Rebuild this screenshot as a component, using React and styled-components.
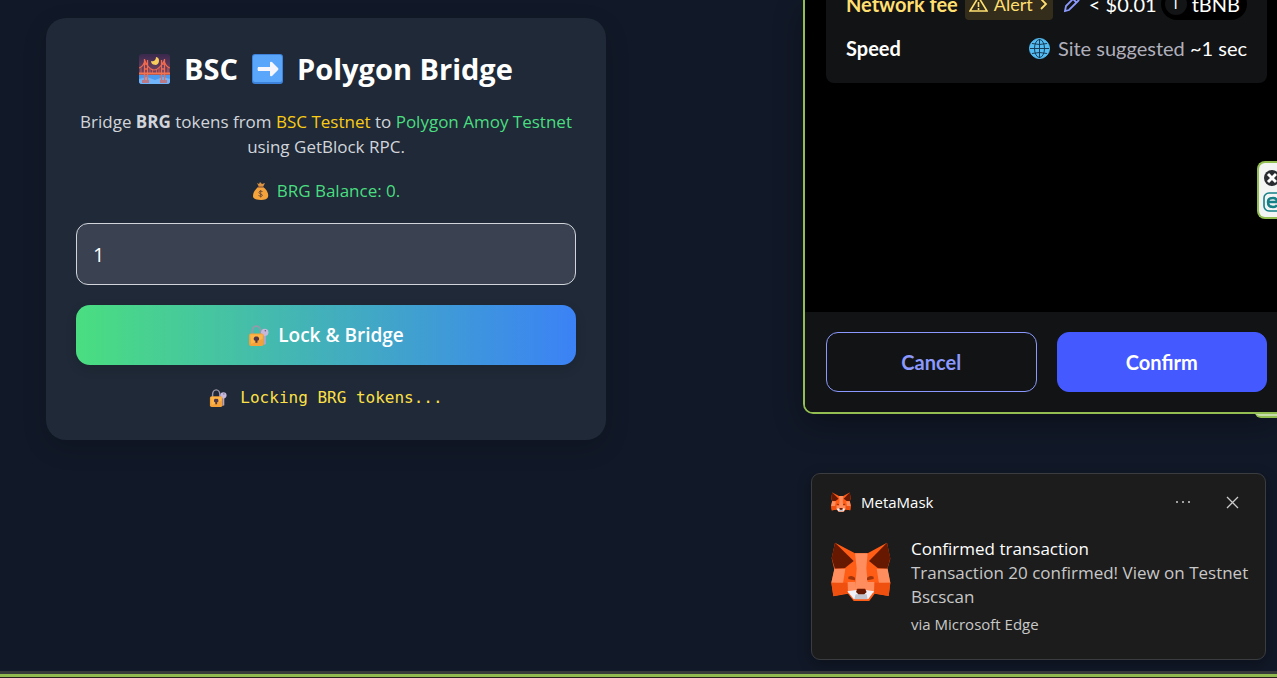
import React, { useState } from 'react'
import styled, { createGlobalStyle } from 'styled-components'

const GlobalStyle = createGlobalStyle`
  * {
    box-sizing: border-box;
  }

  body {
    margin: 0;
    background: #111827;
    color: #fff;
    font-family: "Open Sans", sans-serif;
    overflow: hidden;
  }

  h1, h2, p {
    margin: 0;
  }

  button {
    padding: 0;
    border: 0;
    background: none;
    color: inherit;
    font: inherit;
    cursor: pointer;
  }

  svg {
    display: block;
    flex-shrink: 0;
  }
`

const Desktop = styled.div`
  display: flex;
  flex-direction: column;
  height: 100vh;
`

const Workspace = styled.main`
  flex: 1;
  min-height: 0;
  display: grid;
  grid-template-columns: 1fr 474px;
`

const Frame = styled.footer`
  flex-shrink: 0;
  height: 7px;
  border-top: 3px solid #363939;
  border-bottom: 1px solid #2a2022;
  background: #90b94f;
`

const BridgeCard = styled.section`
  align-self: start;
  width: calc(100% - 92px);
  max-width: 560px;
  margin: 18px 46px;
  padding: 30px;
  border-radius: 20px;
  background: #1f2937;
  box-shadow: 0 8px 24px rgba(0, 0, 0, .15);
  text-align: center;

  h1 {
    display: flex;
    align-items: center;
    justify-content: center;
    gap: 14px;
    margin-bottom: 20px;
    font-size: 29px;
    font-weight: 700;
    line-height: 41px;
  }
`

const Intro = styled.p`
  color: #d1d5db;
  font-size: 17px;
  line-height: 25px;
`

const Chain = styled.span`
  color: ${({ $color }) => $color};
`

const IconLine = styled.p`
  display: flex;
  align-items: center;
  justify-content: center;
  gap: ${({ $gap }) => $gap};
  line-height: 24px;
`

const Balance = styled(IconLine)`
  margin-top: 20px;
  color: #4ade80;
  font-size: 17px;
`

const Status = styled(IconLine)`
  color: #fde047;
  font-family: "DejaVu Sans Mono", monospace;
  font-size: 16px;
  line-height: 25px;
`

const AmountInput = styled.input`
  display: block;
  width: 100%;
  height: 62px;
  margin: 20px 0;
  padding: 0 16px;
  border: 1px solid #d1d5db;
  border-radius: 12px;
  background: #3a4151;
  color: #fff;
  font: 20px "Open Sans", sans-serif;
  outline: 0;
`

const BridgeButton = styled.button`
  display: flex;
  align-items: center;
  justify-content: center;
  gap: 9px;
  width: 100%;
  height: 60px;
  margin-bottom: 20px;
  border-radius: 14px;
  background: linear-gradient(90deg, #4ade80, #3b82f6);
  box-shadow: 0 4px 12px rgba(0, 0, 0, .1);
  font-size: 19px;
  font-weight: 600;
`

const SideColumn = styled.div`
  display: flex;
  flex-direction: column;
`

const Wallet = styled.section`
  position: relative;
  display: flex;
  flex-direction: column;
  height: 414px;
  border: solid #93be52;
  border-width: 0 0 2px 2px;
  border-bottom-left-radius: 10px;
  background: #000;
  box-shadow: 0 10px 30px rgba(0, 0, 0, .3);
  font-family: Lato, sans-serif;
  font-size: 20px;
`

const FeePanel = styled.div`
  display: flex;
  flex-direction: column;
  justify-content: flex-end;
  gap: 12px;
  height: 83px;
  margin: 0 10px 0 21px;
  padding: 0 20px 19px;
  border-radius: 0 0 8px 8px;
  background: #121314;
  overflow: hidden;
`

const FeeRow = styled.div`
  display: flex;
  flex-shrink: 0;
  align-items: center;
  height: 32px;
  white-space: nowrap;
`

const Label = styled.span`
  color: ${({ $color }) => $color || '#fff'};
  font-weight: 700;
`

const Values = styled.div`
  display: flex;
  align-items: center;
  gap: 8px;
  margin-left: auto;
`

const AlertChip = styled.button`
  display: flex;
  align-items: center;
  gap: 6px;
  height: 32px;
  margin-left: 7px;
  padding: 0 4px;
  border-radius: 4px;
  background: #342d1b;
  color: #ffdf70;
  font-size: 18px;
`

const EditButton = styled.button`
  color: #8b99ff;
`

const Token = styled.span`
  display: flex;
  align-items: center;
  gap: 5px;
  height: 32px;
  margin-left: -4px;
  padding: 0 7px 0 4px;
  border-radius: 16px;
  background: #000;
`

const TokenMark = styled.span`
  width: 22px;
  height: 22px;
  border-radius: 50%;
  background: #131416;
  font-size: 14px;
  line-height: 22px;
  text-align: center;
`

const Muted = styled.span`
  color: #b0b0bd;
`

const WalletActions = styled.div`
  display: flex;
  gap: 20px;
  margin-top: auto;
  padding: 20px 10px 20px 21px;
  border-bottom-left-radius: 8px;
  background: #121314;
`

const WalletButton = styled.button`
  flex: 1;
  height: 60px;
  border: 1px solid ${({ $primary }) => ($primary ? '#4459ff' : '#8b99ff')};
  border-radius: 12px;
  background: ${({ $primary }) => ($primary ? '#4459ff' : 'transparent')};
  color: ${({ $primary }) => ($primary ? '#fff' : '#8b99ff')};
  font-weight: 700;
`

const DockTab = styled.div`
  position: absolute;
  top: 161px;
  right: 0;
  display: flex;
  flex-direction: column;
  gap: 5px;
  width: 20px;
  height: 58px;
  padding: 6px 0 0 4px;
  border: 2px solid #93be52;
  border-right: 0;
  border-radius: 8px 0 0 8px;
  background: #f3f5f5;
  overflow: hidden;
`

const DockEdge = styled.div`
  position: absolute;
  top: 412px;
  right: 0;
  width: 22px;
  height: 6px;
  border: solid #93be52;
  border-width: 2px 0;
  border-bottom-left-radius: 6px;
  background: #c6dcab;
`

const Toast = styled.aside`
  margin: 59px 11px 0 8px;
  padding: 15px 12px 23px 19px;
  border: 1px solid #3a3c40;
  border-radius: 9px;
  background: #1c1c1c;
  box-shadow: 0 4px 14px rgba(0, 0, 0, .3);
  color: #c8c8c8;
`

const ToastHeader = styled.header`
  display: flex;
  align-items: center;
  height: 25px;
  margin-bottom: 23px;
  padding-right: 7px;
  color: #fff;
  font-size: 15px;

  span {
    flex: 1;
    margin-left: 10px;
  }

  button {
    margin-left: 27px;
    color: #ccc;
  }
`

const ToastBody = styled.div`
  display: flex;
  gap: 20px;

  svg {
    margin-top: 4px;
  }

  h2, p {
    font-size: 17px;
    font-weight: 400;
    line-height: 24px;
  }

  h2 {
    color: #fff;
  }

  small {
    display: block;
    margin-top: 3px;
    font-size: 15px;
    line-height: 24px;
  }
`

const BridgeIcon = () => (
  <svg width="31" height="30" viewBox="0 0 31 30">
    <defs>
      <linearGradient id="dusk" x2="0" y2="1">
        <stop stopColor="#39284d" />
        <stop offset=".7" stopColor="#784865" />
      </linearGradient>
      <clipPath id="scene"><rect width="31" height="30" rx="3" /></clipPath>
    </defs>
    <g clipPath="url(#scene)">
      <rect width="31" height="30" fill="url(#dusk)" />
      <path d="M0 21h31v9H0z" fill="#4b98ef" />
      <path d="M0 25l8-2 8 3 8-3 7 2v5H0z" fill="#71b4fa" />
      <path d="M17 3a4 4 0 1 1-5 4c3 1 5-1 5-4z" fill="#f8cd5c" />
      <path d="M0 14q4-1 6-7 4 9 9 9t10-9q2 6 6 7" fill="none" stroke="#f2694f" strokeWidth="1.2" />
      <path d="M2 14v6M11 14v6M13.500 16v4M17.500 16v4M20 14v6M29 14v6" stroke="#d35a53" />
      <path d="M5.500 5v23M8.500 6v22M22.500 6v22M25.500 5v23M5 10h3M23 10h3M5 15h3M23 15h3" stroke="#f16a50" strokeWidth="1.300" />
      <path d="M0 19.500h31" stroke="#f3734e" strokeWidth="2" />
      <path d="M3 26h7v3H3zM21 26h7v3h-7z" fill="#bb7885" />
    </g>
  </svg>
)

const ArrowIcon = () => (
  <svg width="31" height="30" viewBox="0 0 31 30">
    <rect width="31" height="30" rx="3" fill="#3d83dc" />
    <rect x="1" y="1" width="29" height="27" rx="2" fill="#59a6fa" />
    <path d="M6 13h12V9q0-2 2-1l6 6q1 1 0 2l-6 6q-2 1-2-1v-4H6q-1-2 0-4z" fill="#f7f6fd" />
  </svg>
)

const MoneyBag = () => (
  <svg width="17" height="18" viewBox="0 0 17 18">
    <path d="M5 1l2 1 1-2 2 2 3-1-2 4H7z" fill="#d99343" />
    <path d="M6 5h5c3 2 6 6 5 10q-1 3-7 3-8 0-8-4c0-4 3-7 5-9z" fill="#f5a43b" />
    <path d="M6 5h5" stroke="#9b5938" strokeWidth="1.3" />
    <path d="M10.500 9.500Q7 8 7 10.500q0 1 1.500 1.500 2 .5 2 1.500-1 2-4 0M8.700 8v7.500" fill="none" stroke="#73503a" />
  </svg>
)

const LockIcon = ({ size }) => (
  <svg width={size} height={size} viewBox="0 0 20 20">
    <path d="M4 9V6a4 5 0 0 1 8 0v3" fill="none" stroke="#9b97a9" strokeWidth="1.600" />
    <path d="M15 8h2v10l-2 1z" fill="#b6a5ca" />
    <circle cx="16" cy="7" r="3.500" fill="#c6b8db" />
    <circle cx="16.500" cy="5.500" r=".7" fill="#665d79" />
    <rect x="1" y="8" width="14" height="12" rx="2" fill="#f4a13a" />
    <path d="M2 9h12v4L3 18z" fill="#ffbd4c" opacity=".7" />
    <path d="M8 11a2 2 0 0 1 1 4v2H7v-2a2 2 0 0 1 1-4z" fill="#503748" />
  </svg>
)

const GlobeIcon = () => (
  <svg width="21" height="21" viewBox="0 0 21 21" fill="none" stroke="#183d58">
    <circle cx="10.500" cy="10.500" r="10" fill="#54bdf4" stroke="#54bdf4" />
    <ellipse cx="10.500" cy="10.500" rx="5" ry="9" />
    <path d="M10.500 1v19M1 10.500h19M3 5.500q7.500 2 15 0M3 15.500q7.500-2 15 0" />
  </svg>
)

const FoxIcon = ({ size }) => (
  <svg width={size} height={size} viewBox="0 0 180 174">
    <path d="M12 2l60 32h38l58-32 10 48-9 32 9 40-5 40-42-7-17 23H69l-18-23-44 8-6-41 9-39-8-34z" fill="#ff5c16" />
    <path d="M12 2L2 48l10 32 29-1 27-22z" fill="#661800" />
    <path d="M168 2l10 47-9 31-28-1-27-22z" fill="#661800" />
    <path d="M72 34h38l-4 45 6 63H72l5-63z" fill="#ff8d5d" />
    <path d="M10 80h33l-7 44-35-2zM170 80h-33l7 44 34-2z" fill="#ff8d5d" />
    <path d="M1 122h49l1 32-44 8zM178 122h-48l-1 32 44 8z" fill="#f0500f" />
    <path d="M50 120h23l3 30-25 4zM130 120h-22l-4 30 25 4z" fill="#ff8d5d" />
    <path d="M52 104q11-5 20 3v8q-8-2-20-4zM128 104q-11-5-20 3v8q8-2 20-4z" fill="#a0350b" />
    <path d="M49 148l28-4 5 13h17l5-13 25 4-17 23H68z" fill="#f0f2f8" />
    <path d="M74 157h33l3 15H70z" fill="#c0c4cd" />
    <path d="M79 140h23l5 10-7 7H82l-7-7z" fill="#661800" />
  </svg>
)

const WarningIcon = () => (
  <svg width="19" height="18" viewBox="0 0 19 18" fill="none" stroke="currentColor" strokeWidth="1.6">
    <path d="M9.500 2L18 16H1zM9.500 7v5M9.500 13v2" />
  </svg>
)

const ChevronIcon = () => (
  <svg width="10" height="14" viewBox="0 0 10 14" fill="none" stroke="currentColor" strokeWidth="1.800">
    <path d="M2 2l5 5-5 5" />
  </svg>
)

const PencilIcon = () => (
  <svg width="18" height="18" viewBox="0 0 18 18" fill="none" stroke="currentColor" strokeWidth="1.800">
    <path d="M2 16l1-5L12 2q2-1 3 1 2 1 0 3L6 15zM10 4l4 4" />
  </svg>
)

const DockIcons = () => (
  <>
    <svg width="18" height="18" viewBox="0 0 18 18">
      <circle cx="9" cy="9" r="8" fill="#292c30" />
      <path d="M5 5l8 8M13 5l-8 8" stroke="#fff" strokeWidth="3" />
    </svg>
    <svg width="20" height="20" viewBox="0 0 20 20" fill="none" stroke="#168086">
      <rect x="1" y="1" width="18" height="18" rx="5" strokeWidth="1.600" />
      <path d="M6 10h8q0-4-4-4-5 0-5 4 0 5 5 5 3 0 4-2" strokeWidth="2.500" />
    </svg>
  </>
)

const Bridge = () => {
  const [amount, setAmount] = useState('1')

  return (
    <BridgeCard>
      <h1>
        <BridgeIcon />
        <span>BSC</span>
        <ArrowIcon />
        <span>Polygon Bridge</span>
      </h1>
      <Intro>
        Bridge <strong>BRG</strong> tokens from <Chain $color="#facc15">BSC Testnet</Chain> to{' '}
        <Chain $color="#4ade80">Polygon Amoy Testnet</Chain> using GetBlock RPC.
      </Intro>
      <Balance $gap="8px"><MoneyBag />BRG Balance: 0.</Balance>
      <AmountInput
        aria-label="Amount"
        value={amount}
        onChange={(e) => setAmount(e.target.value)}
      />
      <BridgeButton type="button"><LockIcon size={21} />Lock &amp; Bridge</BridgeButton>
      <Status $gap="13px"><LockIcon size={18} />Locking BRG tokens...</Status>
    </BridgeCard>
  )
}

const WalletPopup = () => (
  <Wallet>
    <FeePanel>
      <FeeRow>
        <Label $color="#ffdf70">Network fee</Label>
        <AlertChip type="button"><WarningIcon />Alert<ChevronIcon /></AlertChip>
        <Values>
          <EditButton type="button" aria-label="Edit fee"><PencilIcon /></EditButton>
          <span>&lt; $0.01</span>
          <Token><TokenMark>T</TokenMark>tBNB</Token>
        </Values>
      </FeeRow>
      <FeeRow>
        <Label>Speed</Label>
        <Values>
          <GlobeIcon />
          <span><Muted>Site suggested</Muted> ~1 sec</span>
        </Values>
      </FeeRow>
    </FeePanel>
    <WalletActions>
      <WalletButton type="button">Cancel</WalletButton>
      <WalletButton type="button" $primary>Confirm</WalletButton>
    </WalletActions>
    <DockTab><DockIcons /></DockTab>
    <DockEdge />
  </Wallet>
)

const Notification = () => (
  <Toast>
    <ToastHeader>
      <FoxIcon size={20} />
      <span>MetaMask</span>
      <button type="button" aria-label="More options">
        <svg width="20" height="20" viewBox="0 0 20 20" fill="currentColor">
          <circle cx="4" cy="10" r="1" />
          <circle cx="10" cy="10" r="1" />
          <circle cx="16" cy="10" r="1" />
        </svg>
      </button>
      <button type="button" aria-label="Dismiss">
        <svg width="26" height="20" viewBox="0 0 26 20" stroke="currentColor" strokeWidth="1.300">
          <path d="M7 5l11 11M18 5L7 16" />
        </svg>
      </button>
    </ToastHeader>
    <ToastBody>
      <FoxIcon size={60} />
      <div>
        <h2>Confirmed transaction</h2>
        <p>Transaction 20 confirmed! View on Testnet Bscscan</p>
        <small>via Microsoft Edge</small>
      </div>
    </ToastBody>
  </Toast>
)

const App = () => (
  <>
    <GlobalStyle />
    <Desktop>
      <Workspace>
        <Bridge />
        <SideColumn>
          <WalletPopup />
          <Notification />
        </SideColumn>
      </Workspace>
      <Frame />
    </Desktop>
  </>
)

export default App
